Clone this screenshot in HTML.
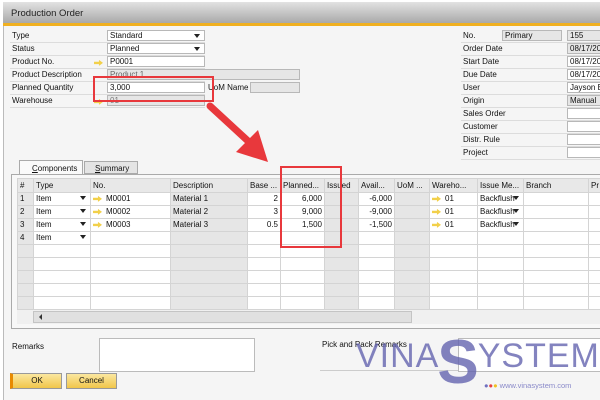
<!DOCTYPE html>
<html><head><meta charset="utf-8"><style>
*{margin:0;padding:0;box-sizing:border-box}
body{width:600px;height:400px;overflow:hidden;background:#fff;font-family:"Liberation Sans",sans-serif;font-size:8px;color:#111;position:relative}
.a{position:absolute}
.win{left:3px;top:2px;width:597px;height:398px;background:#f5f5f5;border-left:1px solid #bbb}
.title{left:3px;top:2px;width:597px;height:21px;background:linear-gradient(#e2e2e2,#a9a9a9);font-size:9.5px;padding:6px 0 0 8px;color:#222}
.orange{left:3px;top:23px;width:597px;height:3px;background:#f0b020}
.lbl{height:13px;border-bottom:1px solid #dcdcdc;line-height:12px;padding-left:2px}
.inp{height:11px;border:1px solid #b8b8b8;background:#fff;line-height:10px;padding-left:2px}
.gr{background:#e6e6e6}
.dd:after{content:"";position:absolute;right:4px;top:3px;border:3px solid transparent;border-top:4px solid #222}
.arr{display:inline-block;width:9px;height:6px;background:#f2d04a;clip-path:polygon(0 30%,55% 30%,55% 0,100% 50%,55% 100%,55% 70%,0 70%);vertical-align:middle;margin-right:4px}
table{border-collapse:collapse;table-layout:fixed;position:absolute;left:17px;top:178px;width:601px}
td{height:13px;border:1px solid #d4d4d4;padding:0 2px;white-space:nowrap;overflow:hidden;background:#fff;line-height:12px}
td.g{background:#e6e6e6}
tr.h td{background:#e8e8e8;height:14px}
td.r{text-align:right}
.red{border:2px solid #e8383c}
</style></head><body>
<div class="a win"></div>
<div class="a title">Production Order</div>
<div class="a orange"></div>

<div class="a" style="left:10px;top:30px;width:195px">
<div class="lbl">Type</div><div class="lbl">Status</div><div class="lbl">Product No.</div><div class="lbl">Product Description</div><div class="lbl">Planned Quantity</div><div class="lbl">Warehouse</div></div>
<div class="a inp dd" style="left:107px;top:30px;width:98px">Standard</div>
<div class="a inp dd" style="left:107px;top:43px;width:98px">Planned</div>
<div class="a" style="left:94px;top:58px"><span class="arr"></span></div>
<div class="a inp" style="left:107px;top:56px;width:98px">P0001</div>
<div class="a inp gr" style="left:107px;top:69px;width:193px;color:#666">Product 1</div>
<div class="a inp" style="left:107px;top:82px;width:98px">3,000</div>
<div class="a" style="left:208px;top:82px;height:12px;line-height:12px">UoM Name</div>
<div class="a inp gr" style="left:250px;top:82px;width:50px"></div>
<div class="a" style="left:94px;top:97px"><span class="arr"></span></div>
<div class="a inp gr" style="left:107px;top:95px;width:98px;color:#777">01</div>

<div class="a" style="left:461px;top:30px;width:139px">
<div class="lbl">No.</div><div class="lbl">Order Date</div><div class="lbl">Start Date</div><div class="lbl">Due Date</div><div class="lbl">User</div><div class="lbl">Origin</div><div class="lbl">Sales Order</div><div class="lbl">Customer</div><div class="lbl">Distr. Rule</div><div class="lbl">Project</div></div>
<div class="a inp gr" style="left:502px;top:30px;width:60px">Primary</div>
<div class="a inp gr" style="left:567px;top:30px;width:40px">155</div>
<div class="a inp gr" style="left:567px;top:43px;width:40px">08/17/20</div>
<div class="a inp" style="left:567px;top:56px;width:40px">08/17/20</div>
<div class="a inp" style="left:567px;top:69px;width:40px">08/17/20</div>
<div class="a inp" style="left:567px;top:82px;width:40px">Jayson B</div>
<div class="a inp gr" style="left:567px;top:95px;width:40px">Manual</div>
<div class="a inp" style="left:567px;top:108px;width:40px"></div>
<div class="a inp" style="left:567px;top:121px;width:40px"></div>
<div class="a inp" style="left:567px;top:134px;width:40px"></div>
<div class="a inp" style="left:567px;top:147px;width:40px"></div>

<div class="a" style="left:19px;top:160px;width:64px;height:15px;background:#fafafa;border:1px solid #aaa;border-bottom:none;padding:3px 0 0 12px"><u>C</u>omponents</div>
<div class="a" style="left:84px;top:161px;width:54px;height:13px;background:#e4e4e4;border:1px solid #aaa;padding:2px 0 0 10px"><u>S</u>ummary</div>
<div class="a" style="left:11px;top:174px;width:595px;height:155px;border:1px solid #aaa;background:#f8f8f8"></div>

<table>
<colgroup><col style="width:16px"><col style="width:57px"><col style="width:80px"><col style="width:77px"><col style="width:33px"><col style="width:44px"><col style="width:34px"><col style="width:36px"><col style="width:35px"><col style="width:48px"><col style="width:46px"><col style="width:65px"><col style="width:30px"></colgroup>
<tr class="h"><td>#</td><td>Type</td><td>No.</td><td>Description</td><td>Base ...</td><td>Planned...</td><td>Issued</td><td>Avail...</td><td>UoM ...</td><td>Wareho...</td><td>Issue Me...</td><td>Branch</td><td>Pr</td></tr>
<tr><td class="g">1</td><td style="position:relative" class="dd">Item</td><td><span class="arr"></span>M0001</td><td class="g">Material 1</td><td class="r">2</td><td class="r">6,000</td><td class="g"></td><td class="r">-6,000</td><td class="g"></td><td><span class="arr"></span>01</td><td style="position:relative" class="dd">Backflush</td><td></td><td></td></tr>
<tr><td class="g">2</td><td style="position:relative" class="dd">Item</td><td><span class="arr"></span>M0002</td><td class="g">Material 2</td><td class="r">3</td><td class="r">9,000</td><td class="g"></td><td class="r">-9,000</td><td class="g"></td><td><span class="arr"></span>01</td><td style="position:relative" class="dd">Backflush</td><td></td><td></td></tr>
<tr><td class="g">3</td><td style="position:relative" class="dd">Item</td><td><span class="arr"></span>M0003</td><td class="g">Material 3</td><td class="r">0.5</td><td class="r">1,500</td><td class="g"></td><td class="r">-1,500</td><td class="g"></td><td><span class="arr"></span>01</td><td style="position:relative" class="dd">Backflush</td><td></td><td></td></tr>
<tr><td class="g">4</td><td style="position:relative" class="dd">Item</td><td></td><td class="g"></td><td></td><td></td><td class="g"></td><td></td><td class="g"></td><td></td><td></td><td></td><td></td></tr>
<tr><td class="g"></td><td></td><td></td><td class="g"></td><td></td><td></td><td class="g"></td><td></td><td class="g"></td><td></td><td></td><td></td><td></td></tr>
<tr><td class="g"></td><td></td><td></td><td class="g"></td><td></td><td></td><td class="g"></td><td></td><td class="g"></td><td></td><td></td><td></td><td></td></tr>
<tr><td class="g"></td><td></td><td></td><td class="g"></td><td></td><td></td><td class="g"></td><td></td><td class="g"></td><td></td><td></td><td></td><td></td></tr>
<tr><td class="g"></td><td></td><td></td><td class="g"></td><td></td><td></td><td class="g"></td><td></td><td class="g"></td><td></td><td></td><td></td><td></td></tr>
<tr><td class="g"></td><td></td><td></td><td class="g"></td><td></td><td></td><td class="g"></td><td></td><td class="g"></td><td></td><td></td><td></td><td></td></tr>
</table>
<div class="a" style="left:17px;top:310px;width:583px;height:14px;background:#f0f0f0"></div>
<div class="a" style="left:33px;top:311px;width:379px;height:12px;background:#e0e0e0;border:1px solid #c4c4c4"></div>
<div class="a" style="left:36px;top:314px;border:3px solid transparent;border-right:3px solid #333"></div>

<div class="a" style="left:12px;top:342px">Remarks</div>
<div class="a" style="left:99px;top:338px;width:156px;height:34px;background:#fff;border:1px solid #bbb"></div>
<div class="a" style="left:322px;top:340px">Pick and Pack Remarks</div>
<div class="a" style="left:320px;top:370px;width:140px;height:1px;background:#ccc"></div>
<div class="a" style="left:458px;top:338px;width:145px;height:34px;background:#fff;border:1px solid #bbb"></div>

<div class="a" style="left:10px;top:373px;width:52px;height:16px;background:linear-gradient(#fbe7a0,#f1c64a);border:1px solid #999;border-left:3px solid #e88a00;text-align:center;line-height:14px">OK</div>
<div class="a" style="left:66px;top:373px;width:51px;height:16px;background:linear-gradient(#fbe7a0,#f1c64a);border:1px solid #999;text-align:center;line-height:14px">Cancel</div>

<div class="a" style="left:356px;top:336px;font-size:34px;color:rgba(100,100,175,.8);font-family:'Liberation Sans',sans-serif;line-height:40px;white-space:nowrap;letter-spacing:1px">VINA<span style="font-size:62px;font-weight:bold;vertical-align:-16px;line-height:40px;margin:0 -2px">S</span>YSTEM</div>
<div class="a" style="left:484px;top:381px;font-size:7.5px;color:rgba(110,110,190,.8)"><span style="color:#7070c0">●</span><span style="color:#e84040">●</span><span style="color:#f0c020">●</span> www.vinasystem.com</div>

<div class="a red" style="left:93px;top:76px;width:121px;height:26px"></div>
<div class="a red" style="left:280px;top:166px;width:62px;height:82px"></div>
<svg class="a" style="left:0;top:0" width="600" height="400"><line x1="210" y1="106" x2="248" y2="141" stroke="#e8383c" stroke-width="7" stroke-linecap="round"/><polygon points="236,152 268,162 258,130" fill="#e8383c"/></svg>
</body></html>
